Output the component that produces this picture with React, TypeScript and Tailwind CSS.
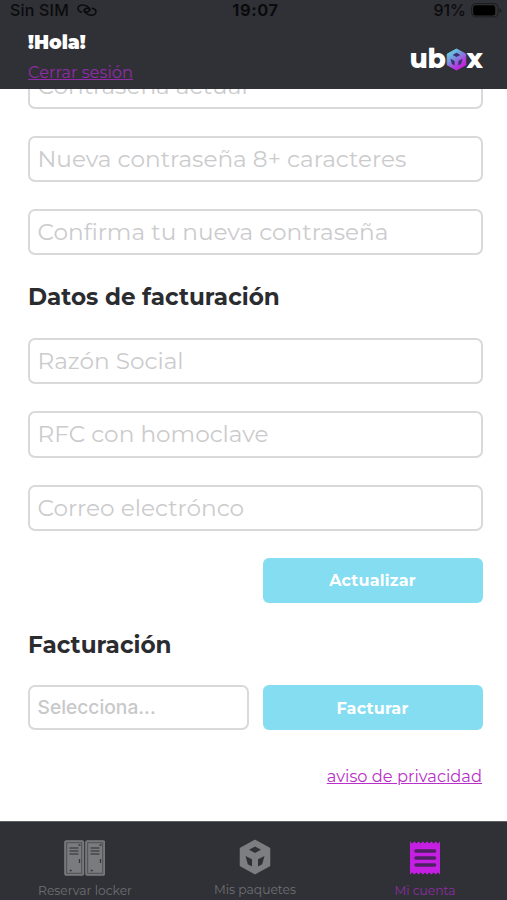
import type { ReactNode } from 'react';

const passwordFields = ['Contraseña actual', 'Nueva contraseña 8+ caracteres', 'Confirma tu nueva contraseña'];
const billingFields = ['Razón Social', 'RFC con homoclave', 'Correo electrónco'];

function Field({ placeholder }: { placeholder: string }) {
  return (
    <div className="flex h-[46.4px] items-center rounded-[7px] border-2 border-[#d9d9db] bg-white pl-[7.5px] pt-px">
      <span className="whitespace-nowrap text-[23.2px] leading-none text-[#cbcbcd]">{placeholder}</span>
    </div>
  );
}

function Button({ children }: { children: ReactNode }) {
  return (
    <button className="h-[45px] w-[220px] rounded-[6px] bg-[#84ddf0] pt-[2px] pr-px text-[16px] font-bold tracking-[0.2px] text-white">
      {children}
    </button>
  );
}

function CubeIcon({ className, fill, hole }: { className: string; fill: string; hole: string }) {
  return (
    <svg viewBox="0 0 32 36" className={className}>
      <defs>
        <linearGradient id="cube" x1="0.15" y1="0.1" x2="0.7" y2="0.95">
          <stop offset="0" stopColor="#67cfe6" />
          <stop offset="0.4" stopColor="#7790dc" />
          <stop offset="0.75" stopColor="#b23fe0" />
          <stop offset="1" stopColor="#c81fe0" />
        </linearGradient>
      </defs>
      <path d="M16 1.5 30.5 9.5v17L16 34.5 1.5 26.5v-17z" fill={fill} stroke={fill} strokeWidth="1.5" strokeLinejoin="round" />
      <path d="M16 7.5 22 10.8 16 14.1 10 10.8zM6.5 17 13 20.3v7.200l-4.200-2.300zM25.500 17 19 20.300v7.200l4.200-2.300z" fill={hole} />
    </svg>
  );
}

function LockerIcon() {
  return (
    <svg viewBox="0 0 41 36" className="mr-[2px] h-9 w-[41px]">
      {[0, 21].map((x) => (
        <g key={x} transform={`translate(${x} 0)`}>
          <rect x="0.8" y="0.8" width="18.8" height="34.4" rx="1.5" fill="#77787b" stroke="#77787b" strokeWidth="1.2" />
          <rect x="2.7" y="2.7" width="15" height="30.6" fill="#7a7b7e" stroke="#4f5054" strokeWidth="1" />
          <path d="M5.5 8h9M5.5 11h9M5.5 14h9" stroke="#46474b" strokeWidth="1.5" />
          <path d="M15.5 19v4M5.7 30.5h2M14.5 5h2" stroke="#36373b" strokeWidth="1.3" />
        </g>
      ))}
    </svg>
  );
}

function ReceiptIcon() {
  return (
    <svg viewBox="0 0 32 36" className="h-9 w-8">
      <path
        d="M1 1.5 3.1 3.5 5.3 1.5 7.4 3.5 9.6 1.5 11.7 3.5 13.9 1.5 16 3.5 18.1 1.5 20.3 3.5 22.4 1.5 24.6 3.5 26.7 1.5 28.9 3.5 31 1.5v33L28.9 32.5 26.7 34.5 24.6 32.5 22.4 34.5 20.3 32.5 18.1 34.5 16 32.5 13.9 34.5 11.7 32.5 9.6 34.5 7.4 32.5 5.3 34.5 3.1 32.5 1 34.5z"
        fill="#c51fe3"
      />
      <path d="M7 11h18.5M7 18h18.5M7 25h18.5" stroke="#4c2360" strokeWidth="3.5" strokeLinecap="round" />
    </svg>
  );
}

function StatusBar() {
  return (
    <div className="flex h-[21px] items-center justify-between pl-[10px] pr-[5px] font-['Inter',sans-serif] text-[16px] leading-none text-[#0b0b0d]">
      <div className="flex w-[120px] items-center gap-[8px] pb-px">
        <span className="whitespace-nowrap font-medium tracking-[0.2px]">Sin SIM</span>
        <svg viewBox="0 0 20 14" className="h-[14px] w-5" fill="none" stroke="currentColor" strokeWidth="1.5" strokeLinecap="round">
          <path d="M4.5 9.200C2.200 8.600 1 7.200 1 5.400 1 3.300 3.200 2 5.600 2c3.400 0 7 2.400 7 4.600 0 1.600-1.300 2.400-3 2.400-1.300 0-2.300-.6-2.800-1.500" />
          <path d="M15.500 5.200c2.300.6 3.500 2 3.500 3.600 0 2.100-2.200 3.400-4.600 3.400-3.400 0-7-2.400-7-4.600 0-1.600 1.300-2.400 3-2.400 1.300 0 2.300.6 2.800 1.500" />
        </svg>
      </div>
      <span className="-ml-px pb-px text-[16.4px] font-bold tracking-[0.6px]">19:07</span>
      <div className="flex w-[120px] items-center justify-end gap-[5px] pb-px">
        <span className="font-medium">91%</span>
        <svg viewBox="0 0 31 15" className="h-[15px] w-[31px]">
          <rect x="0.6" y="0.6" width="26.5" height="13.3" rx="4" fill="none" stroke="#1c1c1f" strokeWidth="1" />
          <rect x="2.2" y="2.2" width="22" height="10.2" rx="2.5" fill="#000" />
          <path d="M28.6 5v5c1.1-.4 1.7-1.4 1.7-2.5s-.6-2.1-1.7-2.5z" fill="#1c1c1f" />
        </svg>
      </div>
    </div>
  );
}

const tabs = [
  { label: 'Reservar locker', icon: <LockerIcon />, className: 'text-[#6e6f73]' },
  { label: 'Mis paquetes', icon: <CubeIcon className="-mt-px h-9 w-8" fill="#7d7e81" hole="#303136" />, className: 'text-[#6e6f73]' },
  { label: 'Mi cuenta', icon: <ReceiptIcon />, className: 'text-[#8c2da3]' },
];

export default function App() {
  return (
    <div className="flex h-[900px] w-[507px] flex-col overflow-hidden bg-white font-['Montserrat','Inter',sans-serif]">
      <header className="h-[89px] shrink-0 bg-[#303136]">
        <StatusBar />
        <div className="flex justify-between pl-7 pr-6">
          <div className="flex flex-col items-start">
            <h1 className="mt-[11px] text-[18.8px] font-black leading-[22px] text-white">!Hola!</h1>
            <a href="#" className="mt-[7px] text-[16.3px] leading-[22px] text-[#922ba8] underline">Cerrar sesión</a>
          </div>
          <div className="mt-[24px] flex h-[28px] items-center text-[26.5px] font-extrabold leading-none text-white">
            <span className="tracking-[-0.3px]">ub</span>
            <CubeIcon className="h-[23px] w-[21px]" fill="url(#cube)" hole="#38316f" />
            <span>x</span>
          </div>
        </div>
      </header>

      <main className="h-[732px] shrink-0 overflow-hidden pl-7 pr-6">
        <div className="-mt-[26.5px] flex flex-col gap-[26.9px]">
          {passwordFields.map((f) => (
            <Field key={f} placeholder={f} />
          ))}
        </div>
        <h2 className="mt-[27px] text-[23.1px] font-bold leading-[30px] text-[#2b2c30]">Datos de facturación</h2>
        <div className="mt-[25.5px] flex flex-col gap-[26.9px]">
          {billingFields.map((f) => (
            <Field key={f} placeholder={f} />
          ))}
        </div>
        <div className="mt-[27px] flex justify-end">
          <Button>Actualizar</Button>
        </div>
        <h2 className="mt-[27px] text-[23.1px] font-bold leading-[30px] text-[#2b2c30]">Facturación</h2>
        <div className="mt-[25.5px] flex justify-between">
          <div className="flex h-[45px] w-[221px] items-center rounded-[7px] border-2 border-[#d9d9db] pl-[7.5px]">
            <span className="font-['Inter',sans-serif] text-[19.2px] font-medium leading-none text-[#c8c8ca]">Selecciona...</span>
          </div>
          <Button>Facturar</Button>
        </div>
        <div className="mt-[34.5px] flex justify-end pr-px">
          <a href="#" className="text-[16.3px] leading-[22px] text-[#b92fc9] underline">aviso de privacidad</a>
        </div>
      </main>

      <nav className="flex h-[79px] shrink-0 border-t border-[#606165] bg-[#303136]">
        {tabs.map((t) => (
          <div key={t.label} className={`flex w-[170px] shrink-0 flex-col items-center pt-[18px] ${t.className}`}>
            {t.icon}
            <span className="mt-[7px] whitespace-nowrap text-[12.3px] leading-[16px]">{t.label}</span>
          </div>
        ))}
      </nav>
    </div>
  );
}
